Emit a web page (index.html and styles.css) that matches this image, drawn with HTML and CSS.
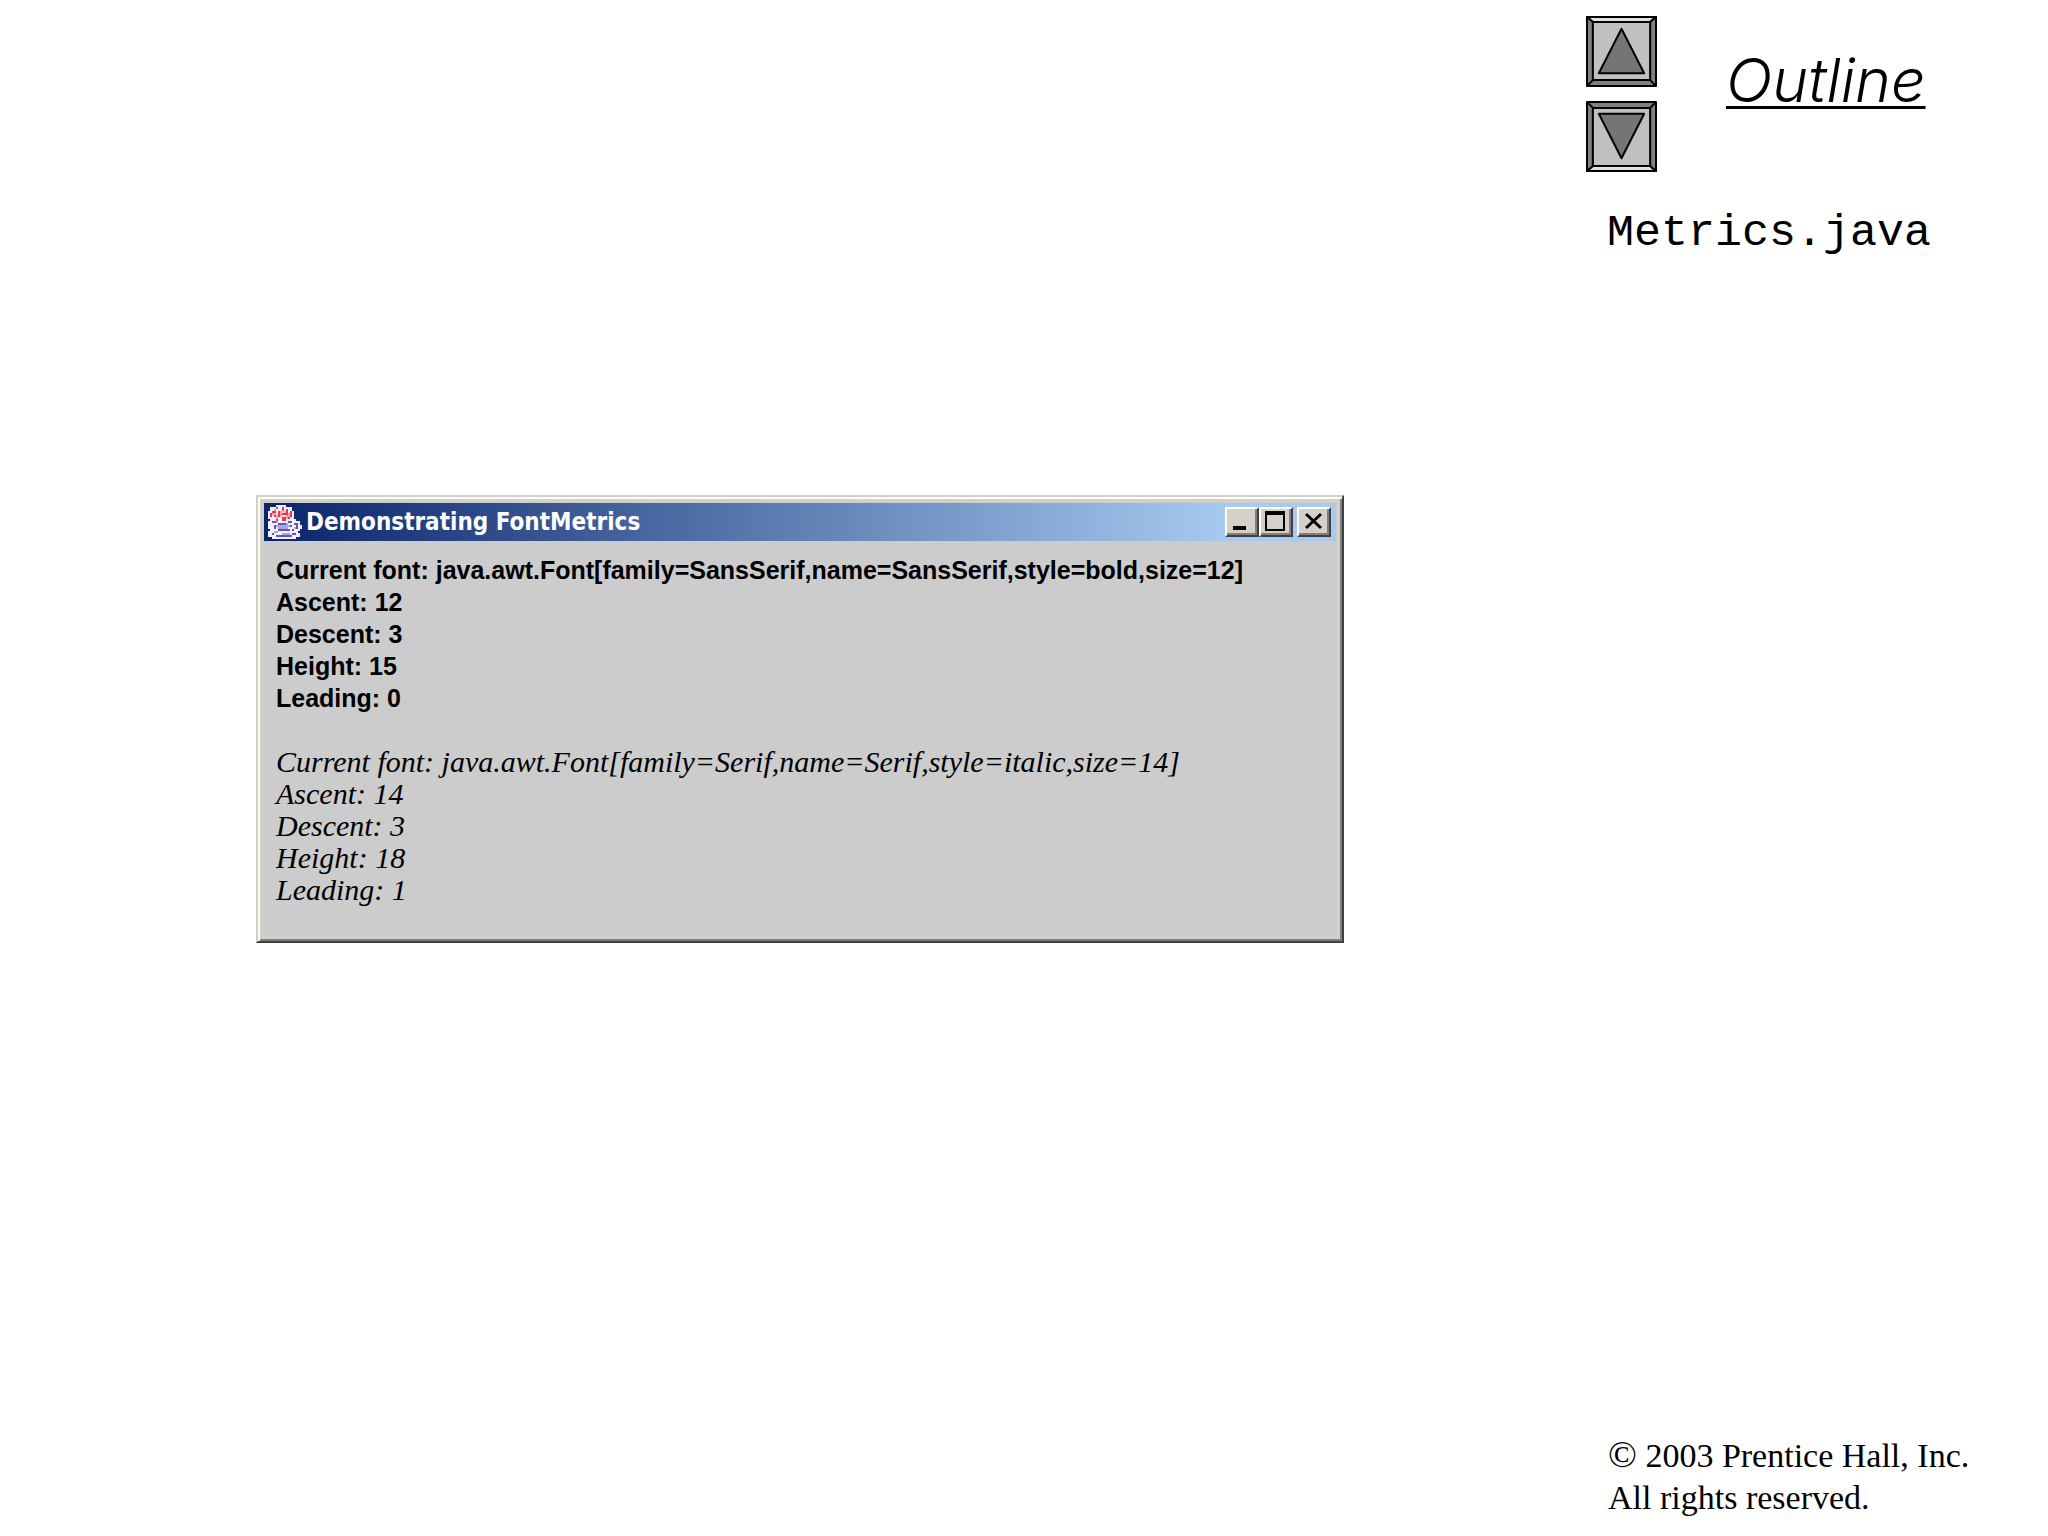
FILE: index.html
```html
<!DOCTYPE html>
<html lang="en">
<head>
  <meta charset="UTF-8">
  <meta name="viewport" content="width=device-width, initial-scale=1.0">
  <title>Metrics.java</title>
  <link rel="stylesheet" href="styles.css">
</head>
<body>
  <main class="content">
    <section class="window">
      <header class="title-bar">
        <!-- Java cup -->
        <svg class="cup" viewBox="0 0 17 17" shape-rendering="crispEdges" aria-hidden="true">
          <path fill="#f4efff" d="M4 0h5v1h3v2h1v4h1v1h2v2h1v2h-1v1h-1v1h1v2h-2v1H2v-1H0v-3h1v-1H0V8h1V7H0V3h1V1h3z"/>
          <path fill="#e8384c" d="M4 1h1v1H4zM7 1h1v2H7zM2 3h2v1H2zM9 2h1v2H9zM5 3h1v3H5zM1 4h1v2H1zM3 5h1v1H3zM7 4h3v1H7zM11 3h1v3h-1zM7 6h2v2H7zM4 7h1v1H4zM10 6h1v1h-1z"/>
          <path fill="#f49aa8" d="M3 2h1v1H3zM8 3h1v1H8zM6 3h1v3H6zM10 4h1v2h-1zM4 5h1v2H4zM9 5h1v2H9zM2 4h2v1H2z"/>
          <path fill="#5a5ab0" d="M2 8h2v1H2zM5 9h4v1H5zM10 8h2v1h-2zM13 9h2v1h-2zM3 10h1v2H3zM11 10h1v1h-1zM14 10h1v2h-1zM5 12h6v1H5zM12 12h1v1h-1zM2 14h1v1H2zM4 15h8v1H4zM12 14h2v1h-2z"/>
          <path fill="#a9a5e0" d="M4 8h1v1H4zM9 9h1v1H9zM4 10h7v1H4zM5 11h5v1H5zM3 13h2v1H3zM7 14h4v1H7zM13 11h1v1h-1z"/>
        </svg>
        <h1>Demonstrating FontMetrics</h1>
        <div class="controls">
          <button type="button" aria-label="Minimize">
            <svg viewBox="0 0 28 24" aria-hidden="true"><path d="M6 16h13v4H6z"/></svg>
          </button>
          <button type="button" aria-label="Maximize">
            <svg viewBox="0 0 28 24" aria-hidden="true"><path fill-rule="evenodd" d="M4 1h20v20H4zM6 5v14h16V5z"/></svg>
          </button>
          <button type="button" class="close" aria-label="Close">
            <svg viewBox="0 0 28 24" aria-hidden="true"><path fill="none" stroke="#000" stroke-width="3" d="M7 4l15 14M22 4L7 18"/></svg>
          </button>
        </div>
      </header>
      <div class="output">
        <p class="sans">
          Current font: java.awt.Font[family=SansSerif,name=SansSerif,style=bold,size=12]<br>
          Ascent: 12<br>
          Descent: 3<br>
          Height: 15<br>
          Leading: 0
        </p>
        <p class="serif">
          Current font: java.awt.Font[family=Serif,name=Serif,style=italic,size=14]<br>
          Ascent: 14<br>
          Descent: 3<br>
          Height: 18<br>
          Leading: 1
        </p>
      </div>
    </section>
  </main>

  <aside class="sidebar">
    <div class="nav">
      <div class="arrows">
        <button type="button" aria-label="Previous slide">
          <svg viewBox="0 0 72 72" aria-hidden="true">
            <g stroke="#000" stroke-width="2" stroke-linejoin="round">
              <path fill="#e0e0e0" d="M1 1h70l-6 5H7z"/>
              <path fill="#808080" d="M1 1l6 5v59l-6 6zM71 1l-6 5v59l6 6zM1 71l6-6h58l6 6z"/>
              <path fill="#c0c0c0" d="M7 6h58v59H7z"/>
              <path fill="#757575" d="M36 13l23 45H13z"/>
            </g>
          </svg>
        </button>
        <button type="button" aria-label="Next slide">
          <svg viewBox="0 0 72 72" aria-hidden="true">
            <g stroke="#000" stroke-width="2" stroke-linejoin="round">
              <path fill="#e0e0e0" d="M1 71l6-5h58l6 5z"/>
              <path fill="#808080" d="M1 1l6 6v59l-6 5zM71 1l-6 6v59l6 5zM1 1l6 6h58l6-6z"/>
              <path fill="#c0c0c0" d="M7 7h58v59H7z"/>
              <path fill="#757575" d="M36 58l23-45H13z"/>
            </g>
          </svg>
        </button>
      </div>
      <a href="#" class="outline">Outline</a>
    </div>
    <h2 class="file-name">Metrics.java</h2>
    <footer class="copyright"><span class="symbol">©</span> 2003 Prentice Hall, Inc.<br>All rights reserved.</footer>
  </aside>
</body>
</html>
```
FILE: styles.css
```css
* {
  box-sizing: border-box;
}
body {
  display: flex;
  min-height: 100vh;
  margin: 0;
  background-color: #fff;
  color: #000;
}
h1, h2, p {
  margin: 0;
}
button {
  padding: 0;
  cursor: pointer;
}
svg {
  display: block;
}
.content {
  flex: 1;
  padding: 495px 240px 0 256px;
}
.window {
  border: 2px solid;
  border-color: #d4d0c8 #404040 #404040 #d4d0c8;
  background-color: #cccccd;
  box-shadow: inset 2px 2px #fff, inset -2px -2px #808080, inset 5px 5px #d4d0c8, inset -5px -5px #d4d0c8;
  padding: 6px;
}
.title-bar {
  display: flex;
  align-items: center;
  height: 38px;
  padding: 0 5px 0 4px;
  background: linear-gradient(to right, #0a246a, #a6caf0 90%);
}
.cup {
  width: 34px;
  height: 34px;
}
.title-bar h1 {
  flex: 1;
  margin-left: 4px;
  color: #fff;
  font: bold 24px/32px "DejaVu Sans Condensed", "DejaVu Sans", sans-serif;
}
.controls {
  display: flex;
}
.controls button {
  width: 34px;
  height: 30px;
  border: 2px solid;
  border-color: #fff #404040 #404040 #fff;
  background-color: #d4d0c8;
  box-shadow: inset -2px -2px #808080;
}
.controls svg {
  width: 28px;
  height: 24px;
}
.controls .close {
  margin-left: 4px;
}
.output {
  padding: 13px 12px 29px;
  white-space: nowrap;
}
.sans {
  font: bold 25px/32px "Liberation Sans", Arial, sans-serif;
}
.serif {
  margin-top: 32px;
  font: italic 30px/32px "Liberation Serif", "Times New Roman", serif;
}
.sidebar {
  display: flex;
  flex-direction: column;
  width: 464px;
  padding: 16px 0 17px 2px;
}
.nav {
  display: flex;
  gap: 69px;
}
.arrows {
  display: flex;
  flex-direction: column;
  gap: 14px;
}
.arrows button {
  width: 71px;
  height: 71px;
  border: 0;
  background: none;
}
.outline {
  margin-top: 32px;
  color: #000;
  font: italic 300 61px/64px Inter, sans-serif;
  text-decoration: underline;
  text-decoration-thickness: 3px;
  text-underline-offset: 4px;
}
.file-name {
  margin: 36px 0 0 21px;
  font: 45px/52px "Liberation Mono", "Courier New", monospace;
}
.copyright {
  margin-top: auto;
  margin-left: 22px;
  font: 34px/42px "Liberation Serif", "Times New Roman", serif;
}
.symbol {
  font-size: 38px;
  line-height: 34px;
}
```
